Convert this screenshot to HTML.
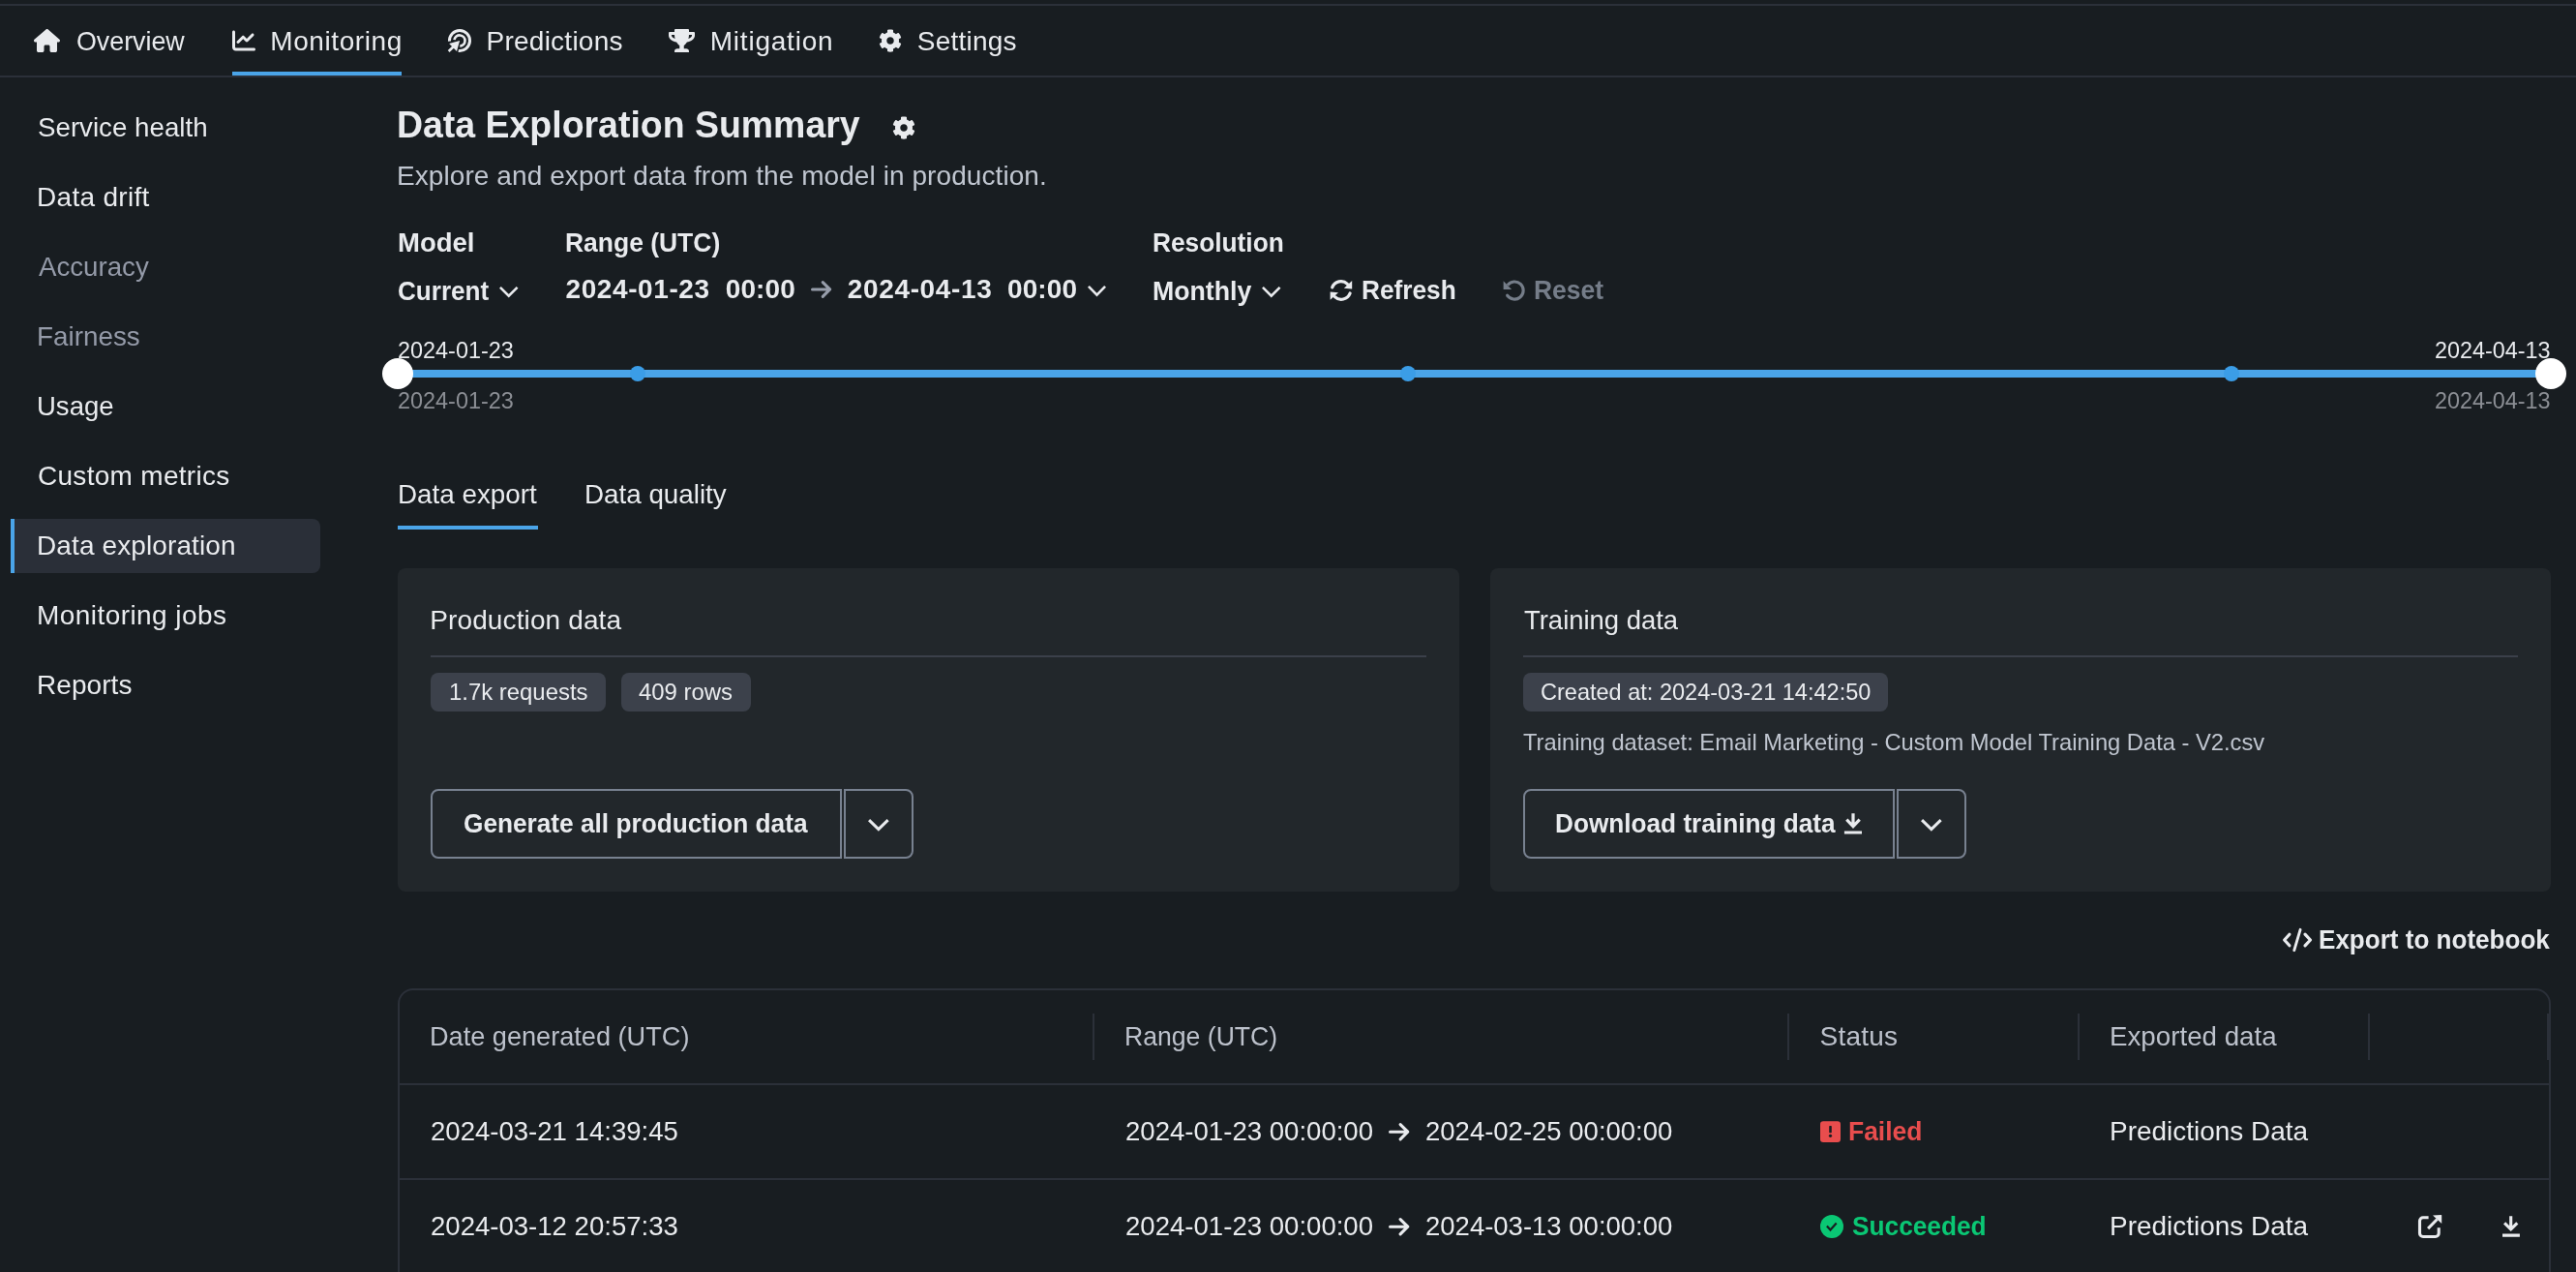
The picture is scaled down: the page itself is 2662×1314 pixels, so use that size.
<!DOCTYPE html>
<html lang="en"><head><meta charset="utf-8"><title>Data Exploration Summary</title>
<style>
html,body{margin:0;padding:0;background:#181d21;}
body{width:2662px;height:1314px;overflow:hidden;position:relative;font-family:"Liberation Sans",sans-serif;color:#e9ebee;}
nav,aside,main,header,section,ul,li,h1,h2,p,button,div{margin:0;padding:0;border:0;background:none;font:inherit;color:inherit;display:block;list-style:none;}
.t{position:absolute;white-space:nowrap;line-height:1;margin:0;padding:0;font-weight:400;transform-origin:0 0;}
.b{font-weight:700;}
svg.i,.abs{position:absolute;overflow:visible;}
#app{position:absolute;left:0;top:0;width:2662px;height:1314px;will-change:transform;}
.panel{position:absolute;background:#22272b;border-radius:8px;top:587px;height:334px;}
.badge{position:absolute;background:#3c414b;border-radius:8px;height:40px;top:695px;}
.btn{position:absolute;box-sizing:border-box;border:2px solid #788190;height:72px;top:815px;}
.hr{position:absolute;height:2px;background:#3b404a;top:677px;}
.vsep{position:absolute;width:2px;height:48px;top:1047px;background:#2b3039;}
.rowline{position:absolute;left:413px;width:2221px;height:2px;background:#2b3039;}
.dot{position:absolute;width:16px;height:16px;border-radius:50%;background:#3b9de7;top:378px;}
.knob{position:absolute;width:32px;height:32px;border-radius:50%;background:#fff;top:370px;}

</style></head><body><div id="app">
<div class="abs" style="left:0;top:0;width:2662px;height:4px;background:#181d21"></div>
<div class="abs" style="left:0;top:4px;width:2662px;height:2px;background:#2b3039"></div>
<nav>
<svg class="i" style="left:35px;top:30px" width="27" height="24" viewBox="0 0 576 512" fill="#e9ebee"><path d="M575.8 255.5c0 18-15 32.1-32 32.1h-32l.7 160.2c0 2.700-.2 5.400-.5 8.100V472c0 22.100-17.900 40-40 40H456c-1.100 0-2.200 0-3.300-.1c-1.400 .1-2.800 .1-4.200 .1H416 392c-22.100 0-40-17.900-40-40V448 384c0-17.700-14.300-32-32-32H256c-17.700 0-32 14.300-32 32v64 24c0 22.100-17.900 40-40 40H160 128.100c-1.500 0-3-.1-4.500-.2c-1.200 .1-2.400 .2-3.600 .2H104c-22.100 0-40-17.900-40-40V360c0-.9 0-1.900 .1-2.800V287.600H32c-18 0-32-14-32-32.100c0-9 3-17 10-24L266.400 8c7-7 15-8 22-8s15 2 21 7L564.800 231.500c8 7 12 15 11 24z"/></svg>
<svg class="i" style="left:240px;top:30px" width="24" height="24" viewBox="0 0 512 512" fill="#e9ebee"><path d="M64 64c0-17.700-14.300-32-32-32S0 46.300 0 64V400c0 44.200 35.800 80 80 80H480c17.700 0 32-14.300 32-32s-14.300-32-32-32H80c-8.800 0-16-7.200-16-16V64zm406.600 86.600c12.500-12.500 12.500-32.800 0-45.300s-32.800-12.500-45.300 0L320 210.700l-57.400-57.400c-12.500-12.500-32.800-12.500-45.300 0l-112 112c-12.500 12.500-12.500 32.800 0 45.300s32.800 12.500 45.300 0L240 221.300l57.400 57.400c12.500 12.500 32.800 12.500 45.300 0l128-128z"/></svg>
<svg class="i" style="left:462px;top:29px" width="26" height="26" viewBox="0 0 26 26" fill="none" stroke="#e9ebee">
<path d="M2.45 13.6A10.55 10.55 0 1 1 11.7 23.5" stroke-width="3"/>
<path d="M7.5 12.1A5.55 5.55 0 1 1 13.3 18.55" stroke-width="2.7"/>
<path d="M13.1 13.1L2.1 15.96L10 24Z" fill="#e9ebee" stroke="#181d21" stroke-width="1.6" paint-order="stroke" stroke-linejoin="miter"/>
<path d="M1.65 23.97L7.6 18.3" stroke-width="2.6"/></svg>
<svg class="i" style="left:691px;top:30px" width="27" height="24" viewBox="0 0 576 512" fill="#e9ebee"><path d="M552 64H448V24c0-13.300-10.700-24-24-24H152c-13.300 0-24 10.700-24 24v40H24C10.700 64 0 74.700 0 88v56c0 35.700 22.500 72.400 61.900 100.700 31.500 22.700 69.800 37.100 110 41.700C203.300 338.500 240 360 240 360v72h-48c-35.300 0-64 20.700-64 56v12c0 6.600 5.400 12 12 12h296c6.600 0 12-5.400 12-12v-12c0-35.300-28.700-56-64-56h-48v-72s36.700-21.500 68.100-73.600c40.300-4.600 78.600-19 110-41.700 39.300-28.300 61.900-65 61.900-100.700V88c0-13.300-10.700-24-24-24zM99.300 192.800C74.900 175.200 64 155.600 64 144v-16h64.200c1 32.600 5.800 61.200 12.800 86.200-15.100-5.200-29.200-12.400-41.700-21.400zM512 144c0 16.100-17.700 36.100-35.300 48.800-12.500 9-26.700 16.200-41.800 21.400 7-25 11.800-53.600 12.800-86.200H512v16z"/></svg>
<svg class="i" style="left:908px;top:30px" width="24" height="24" viewBox="0 0 512 512" fill="#e9ebee"><path d="M487.4 315.7l-42.600-24.600c4.300-23.200 4.300-47 0-70.200l42.600-24.600c4.900-2.800 7.100-8.600 5.500-14-11.100-35.600-30-67.800-54.700-94.600-3.800-4.100-10-5.100-14.800-2.300L380.800 110c-17.900-15.400-38.500-27.300-60.800-35.100V25.800c0-5.600-3.900-10.500-9.400-11.700-36.700-8.200-74.300-7.800-109.200 0-5.500 1.200-9.400 6.100-9.400 11.700V75c-22.200 7.900-42.800 19.800-60.800 35.100L88.700 85.500c-4.900-2.800-11-1.900-14.800 2.300-24.700 26.700-43.600 58.900-54.700 94.600-1.700 5.400.6 11.200 5.500 14L67.300 221c-4.300 23.200-4.300 47 0 70.200l-42.600 24.600c-4.900 2.800-7.100 8.600-5.500 14 11.100 35.600 30 67.800 54.700 94.600 3.800 4.100 10 5.100 14.800 2.300l42.600-24.600c17.900 15.400 38.500 27.300 60.800 35.100v49.200c0 5.600 3.900 10.500 9.400 11.700 36.700 8.200 74.300 7.800 109.200 0 5.500-1.200 9.400-6.100 9.400-11.700v-49.200c22.200-7.900 42.800-19.800 60.800-35.100l42.600 24.600c4.900 2.800 11 1.900 14.800-2.300 24.700-26.700 43.600-58.900 54.700-94.600 1.500-5.500-.7-11.300-5.600-14.100zM256 336c-44.100 0-80-35.900-80-80s35.900-80 80-80 80 35.900 80 80-35.900 80-80 80z"/></svg>
<span class="t" style="left:78.54px;top:29.10px;font-size:28px;transform:scaleX(0.9573);">Overview</span>
<span class="t" style="left:279.25px;top:29.10px;font-size:28px;letter-spacing:0.594px;">Monitoring</span>
<span class="t" style="left:502.50px;top:29.10px;font-size:28px;letter-spacing:0.249px;">Predictions</span>
<span class="t" style="left:733.75px;top:29.10px;font-size:28px;letter-spacing:0.776px;">Mitigation</span>
<span class="t" style="left:947.75px;top:29.10px;font-size:28px;letter-spacing:0.225px;">Settings</span>
<div class="abs" style="left:240px;top:74px;width:175px;height:4px;background:#4aa4e8"></div>
<div class="abs" style="left:0;top:78px;width:2662px;height:2px;background:#2b3039"></div>
</nav>
<aside>
<div class="abs" style="left:11px;top:536px;width:320px;height:56px;background:#2a2f38;border-radius:0 8px 8px 0"></div>
<div class="abs" style="left:11px;top:536px;width:4px;height:56px;background:#4aa4e8"></div>
<span class="t" style="left:39.01px;top:118.10px;font-size:28px;transform:scaleX(0.9894);color:#e9ebee;">Service health</span>
<span class="t" style="left:38.00px;top:190.10px;font-size:28px;letter-spacing:0.298px;color:#e9ebee;">Data drift</span>
<span class="t" style="left:40.00px;top:262.10px;font-size:28px;transform:scaleX(0.9879);color:#949aa8;">Accuracy</span>
<span class="t" style="left:38.01px;top:334.10px;font-size:28px;transform:scaleX(0.9941);color:#949aa8;">Fairness</span>
<span class="t" style="left:38.03px;top:406.10px;font-size:28px;transform:scaleX(0.9826);color:#e9ebee;">Usage</span>
<span class="t" style="left:39.00px;top:478.10px;font-size:28px;letter-spacing:0.291px;color:#e9ebee;">Custom metrics</span>
<span class="t" style="left:38.00px;top:550.10px;font-size:28px;letter-spacing:0.111px;color:#e9ebee;">Data exploration</span>
<span class="t" style="left:38.00px;top:622.10px;font-size:28px;letter-spacing:0.438px;color:#e9ebee;">Monitoring jobs</span>
<span class="t" style="left:38.00px;top:694.10px;font-size:28px;letter-spacing:0.060px;color:#e9ebee;">Reports</span>
</aside>
<main>
<h1 class="t b" style="left:410.10px;top:109.36px;font-size:39.5px;transform:scaleX(0.9480);">Data Exploration Summary</h1>
<svg class="i" style="left:921.5px;top:119.5px" width="24" height="24" viewBox="0 0 512 512" fill="#e9ebee"><path d="M487.4 315.7l-42.600-24.600c4.300-23.200 4.300-47 0-70.200l42.600-24.600c4.900-2.800 7.100-8.600 5.500-14-11.100-35.600-30-67.800-54.700-94.600-3.800-4.100-10-5.100-14.800-2.300L380.800 110c-17.900-15.400-38.500-27.300-60.800-35.100V25.800c0-5.600-3.900-10.500-9.400-11.700-36.700-8.200-74.300-7.800-109.200 0-5.500 1.200-9.400 6.100-9.400 11.700V75c-22.200 7.900-42.800 19.800-60.800 35.100L88.700 85.500c-4.900-2.800-11-1.900-14.800 2.300-24.700 26.700-43.600 58.900-54.700 94.600-1.700 5.400.6 11.200 5.500 14L67.300 221c-4.300 23.200-4.300 47 0 70.200l-42.600 24.600c-4.900 2.800-7.100 8.600-5.500 14 11.100 35.600 30 67.800 54.700 94.600 3.800 4.100 10 5.100 14.800 2.300l42.600-24.600c17.900 15.400 38.500 27.300 60.800 35.100v49.200c0 5.600 3.900 10.500 9.400 11.700 36.700 8.200 74.300 7.800 109.200 0 5.500-1.200 9.400-6.100 9.400-11.700v-49.200c22.200-7.900 42.800-19.800 60.800-35.100l42.600 24.600c4.900 2.800 11 1.900 14.800-2.300 24.700-26.700 43.600-58.900 54.700-94.600 1.500-5.500-.7-11.300-5.600-14.100zM256 336c-44.100 0-80-35.900-80-80s35.900-80 80-80 80 35.900 80 80-35.900 80-80 80z"/></svg>
<p class="t" style="left:410.00px;top:168.10px;font-size:28px;letter-spacing:0.078px;color:#c0c6d0;">Explore and export data from the model in production.</p>
<span class="t b" style="left:411.02px;top:237.10px;font-size:28px;transform:scaleX(0.9827);">Model</span>
<span class="t b" style="left:583.56px;top:237.10px;font-size:28px;transform:scaleX(0.9449);">Range (UTC)</span>
<span class="t b" style="left:1191.06px;top:237.10px;font-size:28px;transform:scaleX(0.9382);">Resolution</span>
<span class="t b" style="left:411.07px;top:287.10px;font-size:28px;transform:scaleX(0.9319);">Current</span>
<svg class="i" style="left:513.5px;top:293.5px" width="23.5" height="15.5" viewBox="-2 -2 23.5 15.5" fill="none" stroke="#e9ebee" stroke-width="2.6"><path d="M0.92 0.92L9.75 9.66L18.58 0.92"/></svg>
<span class="t b" style="left:584.50px;top:285.10px;font-size:28px;letter-spacing:0.594px;">2024-01-23</span>
<span class="t b" style="left:749.75px;top:285.10px;font-size:28px;letter-spacing:0.115px;">00:00</span>
<svg class="i" style="left:836px;top:288.1px" width="25.2" height="21.9" viewBox="-2 -2 25.2 21.9" fill="none" stroke="#969daa" stroke-width="3.1" stroke-linecap="round" stroke-linejoin="round"><path d="M1.55 8.95H19.65M12.25 1.55L19.65 8.95L12.25 16.349999999999998"/></svg>
<span class="t b" style="left:875.75px;top:285.10px;font-size:28px;letter-spacing:0.650px;">2024-04-13</span>
<span class="t b" style="left:1041.00px;top:285.10px;font-size:28px;letter-spacing:0.115px;">00:00</span>
<svg class="i" style="left:1121.75px;top:293px" width="23" height="15.5" viewBox="-2 -2 23 15.5" fill="none" stroke="#e9ebee" stroke-width="2.6"><path d="M0.92 0.92L9.50 9.66L18.08 0.92"/></svg>
<span class="t b" style="left:1191.05px;top:287.10px;font-size:28px;transform:scaleX(0.9533);">Monthly</span>
<svg class="i" style="left:1301.75px;top:293.5px" width="23.5" height="15.5" viewBox="-2 -2 23.5 15.5" fill="none" stroke="#e9ebee" stroke-width="2.6"><path d="M0.92 0.92L9.75 9.66L18.58 0.92"/></svg>
<svg class="i" style="left:1374px;top:289px" width="24" height="22" viewBox="0 0 24 22" fill="none" stroke="#e9ebee" stroke-width="3.2" stroke-linecap="round">
<path d="M2.7 7.9A9.6 9.6 0 0 1 18.4 4.3"/><path d="M21.1 14A9.6 9.6 0 0 1 5.4 17.6"/>
<path d="M23.2 1.1V9.5L14.8 8.7Z" fill="#e9ebee" stroke="none"/><path d="M0.6 20.8V12.4L9 13.2Z" fill="#e9ebee" stroke="none"/></svg>
<span class="t b" style="left:1406.56px;top:286.10px;font-size:28px;transform:scaleX(0.9373);">Refresh</span>
<svg class="i" style="left:1553px;top:288px" width="24" height="24" viewBox="0 0 24 24" fill="none" stroke="#757d89" stroke-width="3.1">
<path d="M4.9 6.6A9.05 9.05 0 1 1 4.6 17.1"/><circle cx="4.6" cy="17.1" r="1.55" fill="#757d89" stroke="none"/><path d="M0.6 2.3V10.9H9.1Z" fill="#757d89" stroke="none"/></svg>
<span class="t b" style="left:1584.56px;top:286.10px;font-size:28px;transform:scaleX(0.9441);color:#757d89;">Reset</span>
<span class="t" style="left:411.02px;top:350.48px;font-size:24px;transform:scaleX(0.9760);">2024-01-23</span>
<span class="t" style="left:2515.78px;top:350.48px;font-size:24px;transform:scaleX(0.9739);">2024-04-13</span>
<div class="abs" style="left:411px;top:382px;width:2225px;height:8px;background:#4aa4e8"></div>
<div class="dot" style="left:651px"></div>
<div class="dot" style="left:1447px"></div>
<div class="dot" style="left:2298px"></div>
<div class="knob" style="left:395px"></div><div class="knob" style="left:2620px"></div>
<span class="t" style="left:411.02px;top:402.48px;font-size:24px;transform:scaleX(0.9760);color:#8b8e94;">2024-01-23</span>
<span class="t" style="left:2515.78px;top:402.48px;font-size:24px;transform:scaleX(0.9739);color:#8b8e94;">2024-04-13</span>
<span class="t" style="left:411.01px;top:496.70px;font-size:28px;transform:scaleX(0.9933);">Data export</span>
<span class="t" style="left:604.02px;top:496.70px;font-size:28px;transform:scaleX(0.9924);">Data quality</span>
<div class="abs" style="left:411px;top:543px;width:145px;height:4px;background:#4aa4e8"></div>
<section class="panel" style="left:411px;width:1097px"></section>
<section class="panel" style="left:1540px;width:1096px"></section>
<h2 class="t" style="left:444.25px;top:627.10px;font-size:28px;letter-spacing:0.120px;">Production data</h2>
<h2 class="t" style="left:1575.00px;top:627.10px;font-size:28px;transform:scaleX(0.9796);">Training data</h2>
<div class="hr" style="left:445px;width:1029px"></div><div class="hr" style="left:1574px;width:1028px"></div>
<div class="badge" style="left:445px;width:181px"></div><div class="badge" style="left:642px;width:134px"></div><div class="badge" style="left:1574px;width:377px"></div>
<span class="t" style="left:463.50px;top:703.48px;font-size:24px;transform:scaleX(0.9959);">1.7k requests</span>
<span class="t" style="left:660.00px;top:703.48px;font-size:24px;transform:scaleX(0.9961);">409 rows</span>
<span class="t" style="left:1591.52px;top:703.48px;font-size:24px;transform:scaleX(0.9801);">Created at: 2024-03-21 14:42:50</span>
<span class="t" style="left:1574.00px;top:755.48px;font-size:24px;transform:scaleX(0.9881);color:#c0c6d0;">Training dataset: Email Marketing - Custom Model Training Data - V2.csv</span>
<div class="btn" style="left:445px;width:425px;border-radius:8px 0 0 8px"></div><div class="btn" style="left:872px;width:72px;border-radius:0 8px 8px 0"></div>
<div class="btn" style="left:1574px;width:384px;border-radius:8px 0 0 8px"></div><div class="btn" style="left:1960px;width:72px;border-radius:0 8px 8px 0"></div>
<span class="t b" style="left:479.06px;top:836.60px;font-size:28px;transform:scaleX(0.9365);">Generate all production data</span>
<span class="t b" style="left:1607.06px;top:836.60px;font-size:28px;transform:scaleX(0.9353);">Download training data</span>
<svg class="i" style="left:895.3px;top:844.3px" width="25.7" height="16.7" viewBox="-2 -2 25.7 16.7" fill="none" stroke="#e9ebee" stroke-width="3"><path d="M1.06 1.06L10.85 10.58L20.64 1.06"/></svg>
<svg class="i" style="left:1983px;top:844.3px" width="25.7" height="16.7" viewBox="-2 -2 25.7 16.7" fill="none" stroke="#e9ebee" stroke-width="3"><path d="M1.06 1.06L10.85 10.58L20.64 1.06"/></svg>
<svg class="i" style="left:1905px;top:840px" width="20" height="22" viewBox="0 0 20 22" fill="none" stroke="#e9ebee" stroke-width="3.2">
<path d="M10 0.3V14M3.3 6.6L10 13.6L16.7 6.6M0.9 20H19"/></svg>
<svg class="i" style="left:2359px;top:959px" width="31" height="24" viewBox="0 0 31 24" fill="none" stroke="#e9ebee" stroke-width="3.2" stroke-linecap="round" stroke-linejoin="round">
<path d="M6.9 6.2L1.65 12L6.9 17.8M23 6.2L28.5 12L23 17.8"/><path d="M18.1 1.3L11.8 22.7" stroke-width="2.9"/></svg>
<span class="t b" style="left:2396.47px;top:956.50px;font-size:28px;transform:scaleX(0.9306);">Export to notebook</span>
<div class="abs" style="left:411px;top:1021px;width:2225px;height:340px;box-sizing:border-box;border:2px solid #2b3039;border-radius:16px"></div>
<div class="vsep" style="left:1129px"></div>
<div class="vsep" style="left:1847px"></div>
<div class="vsep" style="left:2147px"></div>
<div class="vsep" style="left:2447px"></div>
<div class="vsep" style="left:2632px"></div>
<div class="rowline" style="top:1119px"></div><div class="rowline" style="top:1217px"></div>
<span class="t" style="left:444.46px;top:1057.10px;font-size:28px;transform:scaleX(0.9690);color:#bcc1cb;">Date generated (UTC)</span>
<span class="t" style="left:1162.10px;top:1057.10px;font-size:28px;transform:scaleX(0.9500);color:#bcc1cb;">Range (UTC)</span>
<span class="t" style="left:1880.50px;top:1057.10px;font-size:28px;letter-spacing:0.224px;color:#bcc1cb;">Status</span>
<span class="t" style="left:2180.32px;top:1057.10px;font-size:28px;transform:scaleX(0.9903);color:#bcc1cb;">Exported data</span>
<span class="t" style="left:445.42px;top:1155.10px;font-size:28px;transform:scaleX(0.9840);">2024-03-21 14:39:45</span>
<span class="t" style="left:1163.02px;top:1155.10px;font-size:28px;transform:scaleX(0.9848);">2024-01-23 00:00:00</span>
<svg class="i" style="left:1432.9px;top:1157.7px" width="25.3" height="22.4" viewBox="-2 -2 25.3 22.4" fill="none" stroke="#e9ebee" stroke-width="3.1" stroke-linecap="round" stroke-linejoin="round"><path d="M1.55 9.2H19.75M12.100000000000001 1.55L19.75 9.2L12.100000000000001 16.849999999999998"/></svg>
<span class="t" style="left:1472.52px;top:1155.10px;font-size:28px;transform:scaleX(0.9821);">2024-02-25 00:00:00</span>
<span class="t" style="left:2180.30px;top:1155.10px;font-size:28px;transform:scaleX(0.9982);">Predictions Data</span>
<span class="t" style="left:445.42px;top:1253.10px;font-size:28px;transform:scaleX(0.9840);">2024-03-12 20:57:33</span>
<span class="t" style="left:1163.02px;top:1253.10px;font-size:28px;transform:scaleX(0.9848);">2024-01-23 00:00:00</span>
<svg class="i" style="left:1432.9px;top:1255.7px" width="25.3" height="22.4" viewBox="-2 -2 25.3 22.4" fill="none" stroke="#e9ebee" stroke-width="3.1" stroke-linecap="round" stroke-linejoin="round"><path d="M1.55 9.2H19.75M12.100000000000001 1.55L19.75 9.2L12.100000000000001 16.849999999999998"/></svg>
<span class="t" style="left:1472.52px;top:1253.10px;font-size:28px;transform:scaleX(0.9821);">2024-03-13 00:00:00</span>
<span class="t" style="left:2180.30px;top:1253.10px;font-size:28px;transform:scaleX(0.9982);">Predictions Data</span>
<svg class="i" style="left:1881px;top:1158px" width="21" height="22" viewBox="0 0 21 22"><rect x="0" y="0.2" width="21" height="21.7" rx="3.2" fill="#e84d4d"/><rect x="9.2" y="5.1" width="2.6" height="7.1" rx="0.6" fill="#181d21"/><circle cx="10.5" cy="15.3" r="1.6" fill="#181d21"/></svg>
<span class="t b" style="left:1909.96px;top:1155.10px;font-size:28px;transform:scaleX(0.9441);color:#e84d4d;">Failed</span>
<svg class="i" style="left:1881px;top:1255px" width="24" height="24" viewBox="0 0 24 24"><circle cx="12" cy="11.9" r="12" fill="#0ac774"/><path d="M6.9 11.4L10.5 15.5L16.7 8.6" fill="none" stroke="#181d21" stroke-width="2.2"/></svg>
<span class="t b" style="left:1913.80px;top:1253.10px;font-size:28px;transform:scaleX(0.9377);color:#0ac774;">Succeeded</span>
<svg class="i" style="left:2498px;top:1254px" width="26" height="26" viewBox="0 0 26 26" fill="none" stroke="#e9ebee" stroke-width="3.1">
<path d="M11.6 3.7H6A3.5 3.5 0 0 0 2.500 7.200V20A3.500 3.500 0 0 0 6 23.500H18.700A3.500 3.500 0 0 0 22.200 20V14.300"/><path d="M11.100 15.100L20.500 5.500" stroke-width="3"/>
<path d="M16 1.500L24.600 0.900Q25.300 0.900 25.200 1.600L25.200 9.900Z" fill="#e9ebee" stroke="none"/></svg>
<svg class="i" style="left:2585px;top:1256px" width="20" height="22" viewBox="0 0 20 22" fill="none" stroke="#e9ebee" stroke-width="3.1">
<path d="M9.700 0.300V14M3.100 7.300L9.700 13.900L16.300 7.300M1 20.100H18.900"/></svg>
</main>
</div></body></html>
